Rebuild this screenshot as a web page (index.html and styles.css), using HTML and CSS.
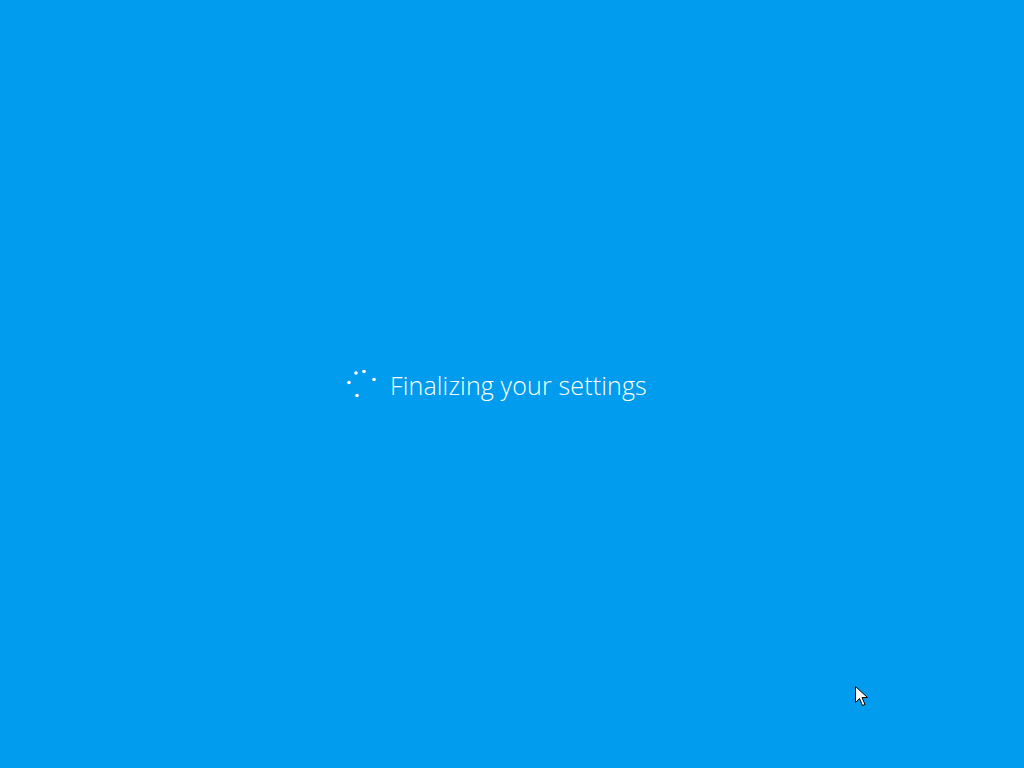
FILE: index.html
```html
<!DOCTYPE html>
<html>
<head>
<meta charset="utf-8">
<link rel="stylesheet" href="styles.css">
</head>
<body>
<div class="screen">
  <div class="status">
    <svg class="spinner" width="30" height="30" viewBox="0 0 30 30">
      <circle cx="10" cy="3" r="1.8" fill="#fff"/>
      <circle cx="18" cy="1.5" r="1.8" fill="#fff"/>
      <circle cx="28" cy="9.5" r="1.8" fill="#fff"/>
      <circle cx="3" cy="12.5" r="1.8" fill="#fff"/>
      <circle cx="11" cy="25.5" r="1.8" fill="#fff"/>
    </svg>
    <span class="label">Finalizing your settings</span>
  </div>
  <svg class="cursor" width="14" height="22" viewBox="0 0 14 22">
    <path d="M0.5 0.5 L0.5 16.5 L4.5 12.5 L7.5 19.5 L10 18.5 L7 11.5 L12.5 11.5 Z" fill="#fff" stroke="#000" stroke-width="1" stroke-linejoin="miter"/>
  </svg>
</div>
</body>
</html>
```
FILE: styles.css
```css
html, body {
  margin: 0;
  padding: 0;
  width: 100%;
  height: 100%;
  overflow: hidden;
}
.screen {
  position: relative;
  width: 1024px;
  height: 768px;
  background: #019cee;
  display: flex;
  align-items: flex-start;
}
.status {
  display: flex;
  align-items: center;
  gap: 14px;
  padding-left: 346px;
  margin-top: 369px;
}
.spinner {
  display: block;
}
.label {
  font-family: "Open Sans", "Liberation Sans", sans-serif;
  font-weight: 300;
  font-size: 25px;
  color: #fff;
  line-height: 32px;
  letter-spacing: 0.15px;
}
.cursor {
  position: absolute;
  left: 855px;
  top: 686px;
}
```
